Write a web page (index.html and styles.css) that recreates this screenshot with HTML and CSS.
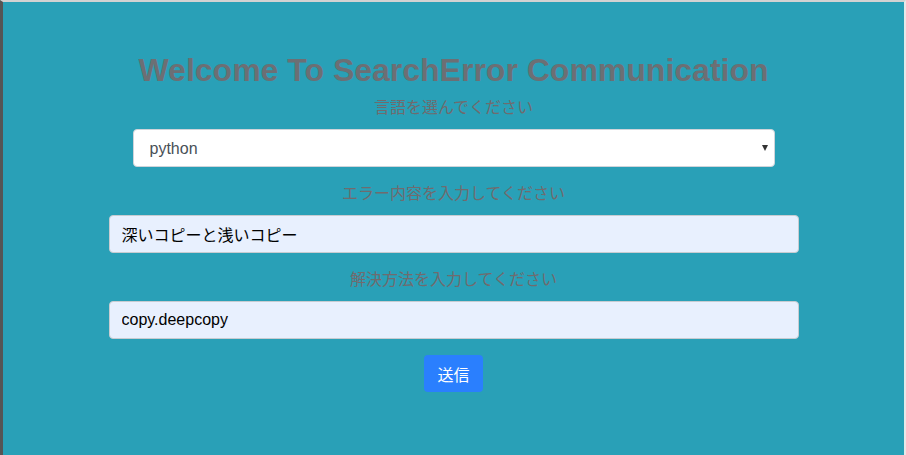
FILE: index.html
```html
<!DOCTYPE html>
<html lang="ja">
<head>
<meta charset="utf-8">
<title>SearchError Communication</title>
<link rel="stylesheet" href="styles.css">
</head>
<body>
<div class="frame">
  <form class="form">
    <h1 class="title">Welcome To SearchError Communication</h1>
    <label class="label">言語を選んでください</label>
    <div class="select-wrap">
      <select class="select">
        <option>python</option>
      </select>
    </div>
    <label class="label">エラー内容を入力してください</label>
    <input class="field" type="text" value="深いコピーと浅いコピー">
    <label class="label">解決方法を入力してください</label>
    <input class="field" type="text" value="copy.deepcopy">
    <button class="submit" type="button">送信</button>
  </form>
</div>
</body>
</html>
```

FILE: styles.css
```css
html, body {
  margin: 0;
  padding: 0;
}

body {
  font-family: "Liberation Sans", "Noto Sans CJK JP", sans-serif;
}

.frame {
  box-sizing: border-box;
  height: 455px;
  background: #29a0b7;
  border-top: 2px solid #d2d2d2;
  border-left: 3px solid #555555;
  border-right: 2px solid #e8e8e8;
}

.form {
  display: flex;
  flex-direction: column;
  align-items: center;
  padding-top: 49px;
  margin: 0 auto;
  width: 690px;
}

.title {
  margin: 0 0 7px;
  font-size: 32px;
  line-height: 1.2;
  font-weight: 700;
  color: #6c6f74;
  white-space: nowrap;
}

.label {
  display: block;
  font-size: 16px;
  line-height: 24px;
  color: #706b6e;
  margin-bottom: 9px;
}

.select-wrap {
  position: relative;
  width: 642px;
  margin-bottom: 15px;
}

.select-wrap::after {
  content: "";
  position: absolute;
  right: 7px;
  top: 16px;
  border-left: 3.5px solid transparent;
  border-right: 3.5px solid transparent;
  border-top: 6px solid #333;
}

.select {
  -webkit-appearance: none;
  appearance: none;
  box-sizing: border-box;
  width: 100%;
  height: 38px;
  padding: 0 16px;
  border: 1px solid #cfd4da;
  border-radius: 4px;
  background: #ffffff;
  font-family: inherit;
  font-size: 16px;
  color: #495057;
}

.field {
  box-sizing: border-box;
  width: 690px;
  height: 38px;
  padding: 0 12px;
  border: 1px solid #c7ccd1;
  border-radius: 4px;
  background: #e8f0fe;
  font-family: inherit;
  font-size: 16px;
  color: #000000;
  margin-bottom: 15px;
}

.submit {
  box-sizing: border-box;
  width: 59px;
  height: 37px;
  margin-top: 1px;
  border: none;
  border-radius: 4px;
  background: #2a7ffe;
  color: #ffffff;
  font-family: inherit;
  font-size: 16px;
  padding: 0;
}
```
